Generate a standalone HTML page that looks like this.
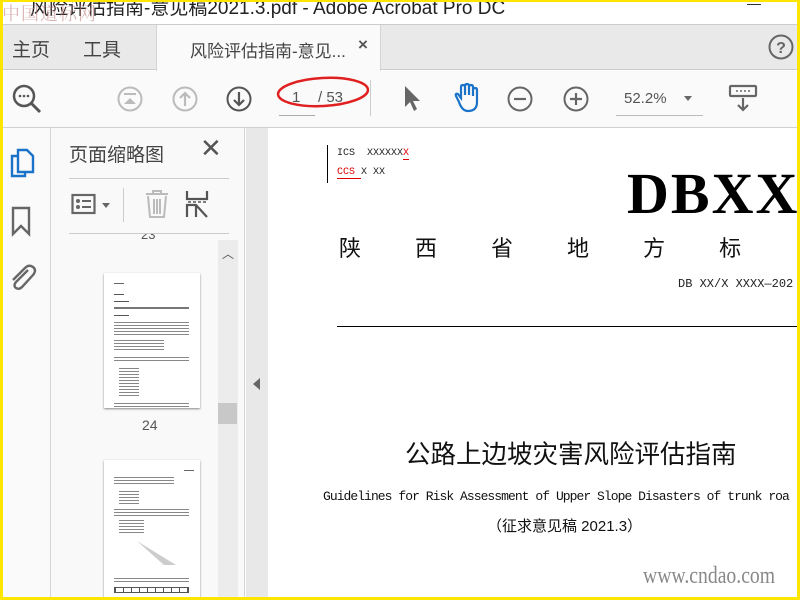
<!DOCTYPE html>
<html><head><meta charset="utf-8"><style>
*{margin:0;padding:0;box-sizing:border-box}
body{width:800px;height:600px;overflow:hidden;background:#fff;font-family:"Liberation Sans","Noto Sans CJK SC",sans-serif;position:relative}
.a{position:absolute}
.ico{position:absolute}
</style></head><body>
<!-- title bar -->
<div class="a" style="left:0;top:0;width:800px;height:25px;background:#fff;border-bottom:1px solid #ccc"></div>
<div class="a" style="left:30px;top:-7px;font-size:19px;color:#222;white-space:nowrap">风险评估指南-意见稿2021.3.pdf - Adobe Acrobat Pro DC</div>
<div class="a" style="left:2px;top:0px;font-size:18px;color:rgba(190,120,120,.55);font-family:'Noto Serif CJK SC',serif;letter-spacing:1px">中国道标网</div>
<div class="a" style="left:747px;top:4px;width:14px;height:1px;background:#333"></div>
<!-- tab bar -->
<div class="a" style="left:0;top:25px;width:800px;height:45px;background:#e9e9e9;border-bottom:1px solid #ccc"></div>
<div class="a" style="left:12px;top:35px;font-size:19px;color:#444">主页</div>
<div class="a" style="left:83px;top:35px;font-size:19px;color:#444">工具</div>
<div class="a" style="left:156px;top:25px;width:225px;height:46px;background:#fafafa;border-left:1px solid #d4d4d4;border-right:1px solid #d4d4d4"></div>
<div class="a" style="left:190px;top:37px;font-size:17px;color:#444">风险评估指南-意见...</div>
<div class="a" style="left:358px;top:35px;font-size:17px;color:#555;font-weight:bold">×</div>
<svg class="ico" style="left:767px;top:33px" width="28" height="28"><circle cx="14" cy="14" r="11.5" fill="none" stroke="#666" stroke-width="2"/><text x="14" y="20" text-anchor="middle" font-size="16" font-weight="bold" fill="#666" font-family="Liberation Sans">?</text></svg>
<!-- toolbar -->
<div class="a" style="left:0;top:71px;width:800px;height:57px;background:#fafafa;border-bottom:1px solid #d0d0d0"></div>
<svg class="ico" style="left:10px;top:82px" width="34" height="34"><circle cx="14" cy="14" r="10" fill="none" stroke="#555" stroke-width="2.5"/><line x1="21" y1="21" x2="30" y2="30" stroke="#555" stroke-width="3"/><circle cx="10" cy="14" r="1.3" fill="#555"/><circle cx="14" cy="14" r="1.3" fill="#555"/><circle cx="18" cy="14" r="1.3" fill="#555"/></svg>
<svg class="ico" style="left:116px;top:85px" width="28" height="28"><circle cx="14" cy="14" r="11.5" fill="none" stroke="#bbb" stroke-width="2"/><line x1="8" y1="9" x2="20" y2="9" stroke="#bbb" stroke-width="2"/><path d="M8 19 L14 13 L20 19Z" fill="#bbb"/></svg>
<svg class="ico" style="left:171px;top:85px" width="28" height="28"><circle cx="14" cy="14" r="11.5" fill="none" stroke="#bbb" stroke-width="2"/><path d="M14 21V8 M9 13L14 8L19 13" fill="none" stroke="#bbb" stroke-width="2.2"/></svg>
<svg class="ico" style="left:225px;top:85px" width="28" height="28"><circle cx="14" cy="14" r="11.5" fill="none" stroke="#555" stroke-width="2"/><path d="M14 7V20 M9 15L14 20L19 15" fill="none" stroke="#555" stroke-width="2.2"/></svg>
<div class="a" style="left:279px;top:115px;width:36px;height:1px;background:#aaa"></div>
<div class="a" style="left:292px;top:89px;font-size:15px;color:#555">1</div>
<div class="a" style="left:318px;top:89px;font-size:15px;color:#555">/ 53</div>
<svg class="ico" style="left:275px;top:74px" width="100" height="36"><ellipse cx="48" cy="18" rx="45" ry="14" fill="none" stroke="#e02020" stroke-width="2.5" transform="rotate(-3 48 18)"/></svg>
<div class="a" style="left:370px;top:80px;width:1px;height:36px;background:#ccc"></div>
<svg class="ico" style="left:400px;top:83px" width="24" height="30"><path d="M5 3 L5 24 L10 19 L14 28 L17 26 L13 18 L20 18Z" fill="#666"/></svg>
<svg class="ico" style="left:450px;top:82px" width="32" height="32"><path d="M9 20 L6 14 Q5 11 8 12 L11 16 L11 5 Q11 3 13 3 Q15 3 15 5 L15 13 L15 4 Q15 2 17 2 Q19 2 19 4 L19 13 L19 5 Q19 3 21 3 Q23 3 23 5 L23 14 L23 8 Q23 6 25 6 Q27 6 27 8 L27 20 Q27 29 18 29 Q12 29 9 20Z" fill="none" stroke="#1a73c8" stroke-width="2.2"/></svg>
<svg class="ico" style="left:506px;top:85px" width="28" height="28"><circle cx="14" cy="14" r="11.5" fill="none" stroke="#666" stroke-width="2"/><line x1="8" y1="14" x2="20" y2="14" stroke="#666" stroke-width="2.2"/></svg>
<svg class="ico" style="left:562px;top:85px" width="28" height="28"><circle cx="14" cy="14" r="11.5" fill="none" stroke="#666" stroke-width="2"/><path d="M8 14H20M14 8V20" stroke="#666" stroke-width="2.2"/></svg>
<div class="a" style="left:624px;top:90px;font-size:15px;color:#555">52.2%</div>
<div class="a" style="left:684px;top:96px;width:0;height:0;border-left:4px solid transparent;border-right:4px solid transparent;border-top:5px solid #666"></div>
<div class="a" style="left:616px;top:115px;width:87px;height:1px;background:#bbb"></div>
<svg class="ico" style="left:728px;top:84px" width="30" height="30"><rect x="2" y="2" width="26" height="10" rx="1" fill="none" stroke="#666" stroke-width="2.2"/><path d="M8 7h2M12 7h2M16 7h2M20 7h2" stroke="#666" stroke-width="1.5"/><path d="M15 14V26 M10 21L15 26L20 21" fill="none" stroke="#666" stroke-width="2.2"/></svg>
<!-- left rail -->
<div class="a" style="left:0;top:128px;width:51px;height:472px;background:#fafafa;border-right:1px solid #d4d4d4"></div>
<svg class="ico" style="left:10px;top:148px" width="28" height="34"><path d="M8 8 H2 V28 H15 V24" fill="none" stroke="#1a73c8" stroke-width="2.4"/><path d="M8 2 H17 L23 8 V24 H8Z" fill="none" stroke="#1a73c8" stroke-width="2.4"/></svg>
<svg class="ico" style="left:10px;top:206px" width="24" height="32"><path d="M3 2H19V28L11 20L3 28Z" fill="none" stroke="#666" stroke-width="2.4"/></svg>
<svg class="ico" style="left:6px;top:262px" width="32" height="32"><path d="M22 8 L10 20 Q7 24 10 26 Q13 28 16 25 L27 13 Q31 8 27 5 Q23 2 19 6 L7 18" fill="none" stroke="#666" stroke-width="2.4"/></svg>
<!-- panel -->
<div class="a" style="left:51px;top:128px;width:194px;height:472px;background:#f9f9f9;border-right:1px solid #d4d4d4"></div>
<div class="a" style="left:69px;top:140px;font-size:19px;color:#444">页面缩略图</div>
<div class="a" style="left:200px;top:133px;font-size:26px;color:#555">✕</div>
<div class="a" style="left:69px;top:178px;width:160px;height:1px;background:#ccc"></div>
<svg class="ico" style="left:71px;top:193px" width="26" height="24"><rect x="1.5" y="2" width="22" height="18" fill="none" stroke="#666" stroke-width="2.2"/><circle cx="7" cy="8" r="2" fill="#666"/><circle cx="7" cy="14" r="2" fill="#666"/><path d="M11 8H20M11 14H20" stroke="#666" stroke-width="2"/></svg>
<div class="a" style="left:102px;top:203px;border-left:4px solid transparent;border-right:4px solid transparent;border-top:5px solid #666"></div>
<div class="a" style="left:123px;top:188px;width:1px;height:34px;background:#ccc"></div>
<svg class="ico" style="left:143px;top:189px" width="28" height="30"><path d="M3 5H25M10 5V2H18V5M5 7L7 28H21L23 7M11 10V25M14 10V25M17 10V25" fill="none" stroke="#bbb" stroke-width="2"/></svg>
<svg class="ico" style="left:185px;top:189px" width="26" height="30"><path d="M2 2V10H22V2M2 28V16H11L22 28M11 16V28" fill="none" stroke="#555" stroke-width="2.2"/><path d="M3 13h3M8 13h3M13 13h3M18 13h3" stroke="#555" stroke-width="1.5"/></svg>
<div class="a" style="left:141px;top:227px;font-size:13px;color:#555">23</div>
<div class="a" style="left:51px;top:224px;width:167px;height:10px;background:#f9f9f9"></div>
<div class="a" style="left:69px;top:233px;width:160px;height:1px;background:#ccc"></div>
<!-- scrollbar -->
<div class="a" style="left:218px;top:240px;width:20px;height:360px;background:#ececec"></div>
<div class="a" style="left:222px;top:245px;font-size:12px;color:#555">︿</div>
<div class="a" style="left:218px;top:403px;width:19px;height:21px;background:#c8c8c8"></div>
<!-- thumbnails -->
<div class="a" style="left:104px;top:273px;width:96px;height:135px;background:#fff;box-shadow:0 1px 2px #888;overflow:hidden">
<div style="margin:10px 10px;height:1px;width:10px;background:#666"></div>
<div style="margin:6px 10px;height:1px;width:10px;background:#555"></div>
<div style="margin:5px 10px;height:1px;width:15px;background:#555"></div>
<div style="margin:4px 10px;height:2px;width:75px;background:#777"></div>
<div style="margin:6px 10px;height:1px;width:15px;background:#555"></div>
<div style="margin:4px 10px;height:14px;width:75px;background:repeating-linear-gradient(#888 0 1px,#fff 1px 3px)"></div>
<div style="margin:3px 10px;height:12px;width:50px;background:repeating-linear-gradient(#888 0 1px,#fff 1px 3px)"></div>
<div style="margin:5px 10px;height:6px;width:75px;background:repeating-linear-gradient(#888 0 1px,#fff 1px 3px)"></div>
<div style="margin:5px 15px;height:30px;width:20px;background:repeating-linear-gradient(#888 0 1px,#fff 1px 3px)"></div>
<div style="margin:0 10px;height:8px;width:75px;background:repeating-linear-gradient(#888 0 1px,#fff 1px 3px)"></div>
</div>
<div class="a" style="left:142px;top:417px;font-size:14px;color:#555">24</div>
<div class="a" style="left:104px;top:460px;width:96px;height:140px;background:#fff;box-shadow:0 1px 2px #888;overflow:hidden">
<div style="margin:10px 0 0 80px;height:1px;width:10px;background:#666"></div>
<div style="margin:6px 10px;height:8px;width:60px;background:repeating-linear-gradient(#888 0 1px,#fff 1px 3px)"></div>
<div style="margin:4px 15px;height:14px;width:20px;background:repeating-linear-gradient(#888 0 1px,#fff 1px 3px)"></div>
<div style="margin:3px 10px;height:8px;width:75px;background:repeating-linear-gradient(#888 0 1px,#fff 1px 3px)"></div>
<div style="margin:3px 15px;height:14px;width:25px;background:repeating-linear-gradient(#888 0 1px,#fff 1px 3px)"></div>
<svg width="96" height="34"><path d="M33 4 L60 28 L72 28Z" fill="#ccc"/></svg>
<div style="margin:2px 10px;height:6px;width:75px;background:repeating-linear-gradient(#888 0 1px,#fff 1px 3px)"></div>
<div style="margin:3px 10px;height:6px;width:75px;border:1px solid #555;background:repeating-linear-gradient(90deg,#555 0 1px,#fff 1px 8px)"></div>
</div>
<!-- collapse strip + doc bg -->
<div class="a" style="left:246px;top:128px;width:22px;height:472px;background:#e8e8e8"></div>
<div class="a" style="left:253px;top:378px;border-top:6px solid transparent;border-bottom:6px solid transparent;border-right:7px solid #666"></div>
<div class="a" style="left:268px;top:128px;width:532px;height:472px;background:#fff"></div>
<!-- page content -->
<div class="a" style="left:327px;top:145px;width:1px;height:38px;background:#000"></div>
<div class="a" style="left:337px;top:148px;font-size:10px;font-family:'Liberation Mono',monospace;color:#222">ICS &nbsp;XXXXXX<span style="color:#d00;border-bottom:1.5px solid #d00">X</span></div>
<div class="a" style="left:337px;top:167px;font-size:10px;font-family:'Liberation Mono',monospace;color:#222"><span style="color:#d00;border-bottom:1.5px solid #d00">CCS </span>X XX</div>
<div class="a" style="left:627px;top:160px;font-size:58px;font-weight:bold;font-family:'Liberation Serif',serif;color:#000;white-space:nowrap;letter-spacing:2px">DBXX</div>
<div class="a" style="left:339px;top:231px;font-size:22px;color:#111;white-space:nowrap">陕<span style="margin-left:54px">西</span><span style="margin-left:54px">省</span><span style="margin-left:54px">地</span><span style="margin-left:54px">方</span><span style="margin-left:54px">标</span></div>
<div class="a" style="left:678px;top:277px;font-size:12px;font-family:'Liberation Mono',monospace;color:#222;white-space:nowrap">DB XX/X XXXX—202</div>
<div class="a" style="left:337px;top:326px;width:463px;height:1px;background:#000"></div>
<div class="a" style="left:405px;top:434px;font-size:25.5px;color:#111;white-space:nowrap">公路上边坡灾害风险评估指南</div>
<div class="a" style="left:323px;top:489px;font-size:13px;font-family:'Liberation Mono',monospace;color:#111;white-space:nowrap;letter-spacing:-.95px">Guidelines for Risk Assessment of Upper Slope Disasters of trunk roa</div>
<div class="a" style="left:487px;top:515px;font-size:15px;color:#111;white-space:nowrap">（征求意见稿 2021.3）</div>
<div class="a" style="left:643px;top:563px;font-size:24px;font-family:'Liberation Serif',serif;color:#888;white-space:nowrap;transform:scaleX(.82);transform-origin:left">www.cndao.com</div>
<!-- yellow frame -->
<div class="a" style="left:0;top:0;width:800px;height:600px;border:3px solid #ffe600;border-top-width:2px"></div>
</body></html>
